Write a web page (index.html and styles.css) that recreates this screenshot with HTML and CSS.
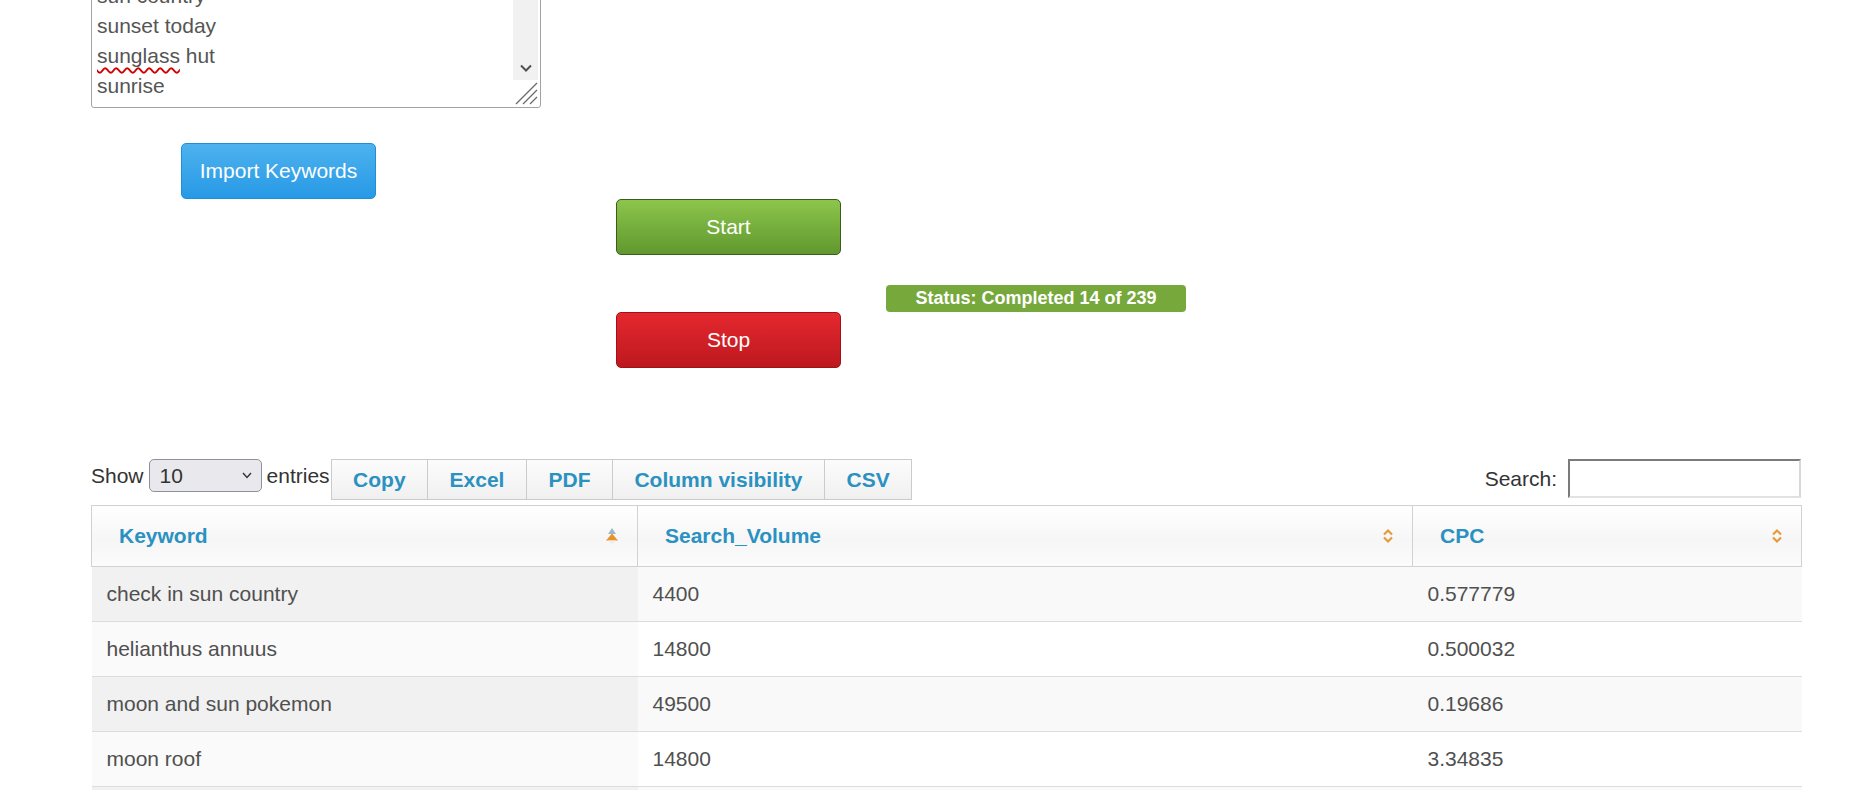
FILE: index.html
```html
<!DOCTYPE html>
<html>
<head>
<meta charset="utf-8">
<title>Keyword Tool</title>
<link rel="stylesheet" href="styles.css">
</head>
<body>
<div class="page">
  <div class="ta">
    <div class="ta-text">
      <div>sun country</div>
      <div>sunset today</div>
      <div><span class="misspelled">sunglass</span> hut</div>
      <div>sunrise</div>
    </div>
    <div class="ta-bar">
      <div class="ta-track"></div>
      <div class="ta-arrow">
        <svg width="12" height="8" viewBox="0 0 12 8"><polyline points="1,1.5 6,6.5 11,1.5" fill="none" stroke="#505050" stroke-width="2"/></svg>
      </div>
      <div class="ta-corner">
        <svg width="25" height="27" viewBox="0 0 25 27">
          <line x1="3" y1="24" x2="24" y2="3" stroke="#6a6a6a" stroke-width="1.3"/>
          <line x1="10" y1="24" x2="24" y2="10" stroke="#6a6a6a" stroke-width="1.3"/>
          <line x1="17" y1="24" x2="24" y2="17" stroke="#6a6a6a" stroke-width="1.3"/>
        </svg>
      </div>
    </div>
  </div>

  <div class="import-row">
    <button class="btn btn-import">Import Keywords</button>
  </div>

  <div class="controls">
    <button class="btn btn-start">Start</button>
    <div class="status-row"><span class="status">Status: Completed 14 of 239</span></div>
    <button class="btn btn-stop">Stop</button>
  </div>

  <div class="dt-toolbar">
    <div class="dt-length">
      <span>Show</span>
      <span class="select"><span>10</span>
        <svg width="10" height="7" viewBox="0 0 10 7"><polyline points="1,1 5,5.5 9,1" fill="none" stroke="#333" stroke-width="1.4"/></svg>
      </span>
      <span>entries</span>
    </div>
    <div class="dt-buttons">
      <span class="dt-btn">Copy</span>
      <span class="dt-btn">Excel</span>
      <span class="dt-btn">PDF</span>
      <span class="dt-btn">Column visibility</span>
      <span class="dt-btn">CSV</span>
    </div>
    <div class="dt-filter">
      <span>Search:</span>
      <span class="search-input"></span>
    </div>
  </div>

  <table class="dt">
    <colgroup>
      <col class="c1">
      <col class="c2">
      <col class="c3">
    </colgroup>
    <thead>
      <tr>
        <th><div class="th-in"><span>Keyword</span>
          <svg class="sort" width="14" height="18" viewBox="0 0 14 18">
            <polygon points="7,1 11,7 3,7" fill="#9fb6cd"/>
            <polygon points="7,6.5 13,13.5 1,13.5" fill="#e8932a"/>
            <polygon points="3,13.5 11,13.5 7,17" fill="#ececec"/>
          </svg></div></th>
        <th><div class="th-in"><span>Search_Volume</span>
          <svg class="sort" width="12" height="16" viewBox="0 0 12 16">
            <polyline points="2,6.5 6,2.5 10,6.5" fill="none" stroke="#e59a3b" stroke-width="2.2"/>
            <polyline points="2,9.5 6,13.5 10,9.5" fill="none" stroke="#e59a3b" stroke-width="2.2"/>
          </svg></div></th>
        <th><div class="th-in"><span>CPC</span>
          <svg class="sort" width="12" height="16" viewBox="0 0 12 16">
            <polyline points="2,6.5 6,2.5 10,6.5" fill="none" stroke="#e59a3b" stroke-width="2.2"/>
            <polyline points="2,9.5 6,13.5 10,9.5" fill="none" stroke="#e59a3b" stroke-width="2.2"/>
          </svg></div></th>
      </tr>
    </thead>
    <tbody>
      <tr class="odd"><td class="sorted">check in sun country</td><td>4400</td><td>0.577779</td></tr>
      <tr class="even"><td class="sorted">helianthus annuus</td><td>14800</td><td>0.500032</td></tr>
      <tr class="odd"><td class="sorted">moon and sun pokemon</td><td>49500</td><td>0.19686</td></tr>
      <tr class="even"><td class="sorted">moon roof</td><td>14800</td><td>3.34835</td></tr>
      <tr class="odd"><td class="sorted">&nbsp;</td><td>&nbsp;</td><td>&nbsp;</td></tr>
    </tbody>
  </table>
</div>
</body>
</html>
```

FILE: styles.css
```css
html, body {
  margin: 0;
  padding: 0;
  overflow: hidden;
  background: #fff;
}

body {
  font-family: "Liberation Sans", Arial, sans-serif;
  font-size: 21px;
  line-height: 30px;
  color: #333;
}

.page {
  padding-left: 91px;
  width: 1710px;
}

/* fake textarea scrolled to bottom */
.ta {
  box-sizing: border-box;
  width: 450px;
  height: 131px;
  margin-top: -23px;
  border: 1px solid #a3a3a3;
  border-radius: 3px;
  display: flex;
  overflow: hidden;
  background: #fff;
}

.ta-text {
  flex: 1;
  padding: 3px 4px 3px 5px;
  color: #555;
  line-height: 30px;
}

.misspelled {
  text-decoration: underline wavy #d40000;
  text-decoration-thickness: 1.5px;
  text-underline-offset: 4px;
  text-decoration-skip-ink: none;
}

.ta-bar {
  width: 25px;
  margin-right: 2px;
  display: flex;
  flex-direction: column;
}

.ta-track {
  flex: 1;
  background: #f1f1f1;
}

.ta-arrow {
  height: 25px;
  background: #f1f1f1;
  display: flex;
  align-items: center;
  justify-content: center;
}

.ta-corner {
  height: 27px;
  background: #fff;
}

.ta-corner svg {
  display: block;
}

/* buttons */
.btn {
  display: block;
  box-sizing: border-box;
  padding: 0;
  margin: 0;
  font-family: "Liberation Sans", Arial, sans-serif;
  font-size: 21px;
  color: #fff;
  border-radius: 5px;
  height: 56px;
  cursor: pointer;
}

.import-row {
  margin-top: 35px;
  padding-left: 90px;
}

.btn-import {
  width: 195px;
  background: linear-gradient(to bottom, #4db2ee 0%, #2799e6 100%);
  border: 1px solid #1f8fdc;
}

.controls {
  padding-left: 525px;
}

.btn-start {
  width: 225px;
  background: linear-gradient(to bottom, #8dc54c 0%, #60982f 100%);
  border: 1px solid #3a5c1d;
}

.btn-stop {
  width: 225px;
  background: linear-gradient(to bottom, #e5282f 0%, #bd181f 100%);
  border: 1px solid #9e1318;
}

.status-row {
  margin-top: 30px;
  padding-left: 270px;
}

.status {
  display: block;
  width: 300px;
  height: 27px;
  line-height: 26px;
  background: #76a83b;
  color: #fff;
  font-weight: bold;
  font-size: 18px;
  text-align: center;
  border-radius: 4px;
}

/* data table toolbar */
.dt-toolbar {
  margin-top: 91px;
  display: flex;
  align-items: flex-start;
}

.dt-length {
  display: flex;
  align-items: center;
  height: 33px;
}

.select {
  box-sizing: border-box;
  width: 113px;
  height: 33px;
  margin: 0 5px;
  padding: 0 9px 0 10px;
  background: #e9e9ed;
  border: 1px solid #8f8f9d;
  border-radius: 5px;
  display: flex;
  align-items: center;
  justify-content: space-between;
  color: #333;
}

.dt-buttons {
  display: flex;
  margin-left: 1px;
}

.dt-btn {
  box-sizing: border-box;
  height: 41px;
  line-height: 39px;
  padding: 0 21.5px;
  margin-right: -1px;
  border: 1px solid #cbcbcb;
  background: linear-gradient(to bottom, #fcfcfc 0%, #f0f0f0 100%);
  color: #2a91c1;
  font-weight: bold;
}

.dt-filter {
  margin-left: auto;
  display: flex;
  align-items: center;
  height: 39px;
}

.search-input {
  box-sizing: border-box;
  width: 233px;
  height: 39px;
  margin-left: 11px;
  border-top: 2px solid #7b7b7b;
  border-left: 2px solid #7b7b7b;
  border-right: 2px solid #d8d8d8;
  border-bottom: 2px solid #e2e2e2;
  background: #fff;
}

/* table */
.dt {
  margin-top: 5px;
  width: 1710px;
  table-layout: fixed;
  border-collapse: collapse;
}

.c1 { width: 546px; }
.c2 { width: 775px; }
.c3 { width: 389px; }

.dt th {
  padding: 15px 18px 15px 27px;
  border: 1px solid #d2d2d2;
  background: linear-gradient(to bottom, #ffffff 0%, #f6f6f6 55%, #fbfbfb 100%);
  color: #2a91c1;
  font-weight: bold;
  text-align: left;
  line-height: 30px;
}

.th-in {
  display: flex;
  align-items: center;
  justify-content: space-between;
}

.sort {
  display: block;
  flex: none;
}

.dt td {
  padding: 12px 15px;
  border-top: 1px solid #dcdcdc;
  color: #505050;
  line-height: 30px;
  white-space: nowrap;
}

.dt tr.odd td { background: #f9f9f9; }
.dt tr.odd td.sorted { background: #f1f1f1; }
.dt tr.even td { background: #ffffff; }
.dt tr.even td.sorted { background: #fafafa; }
```
